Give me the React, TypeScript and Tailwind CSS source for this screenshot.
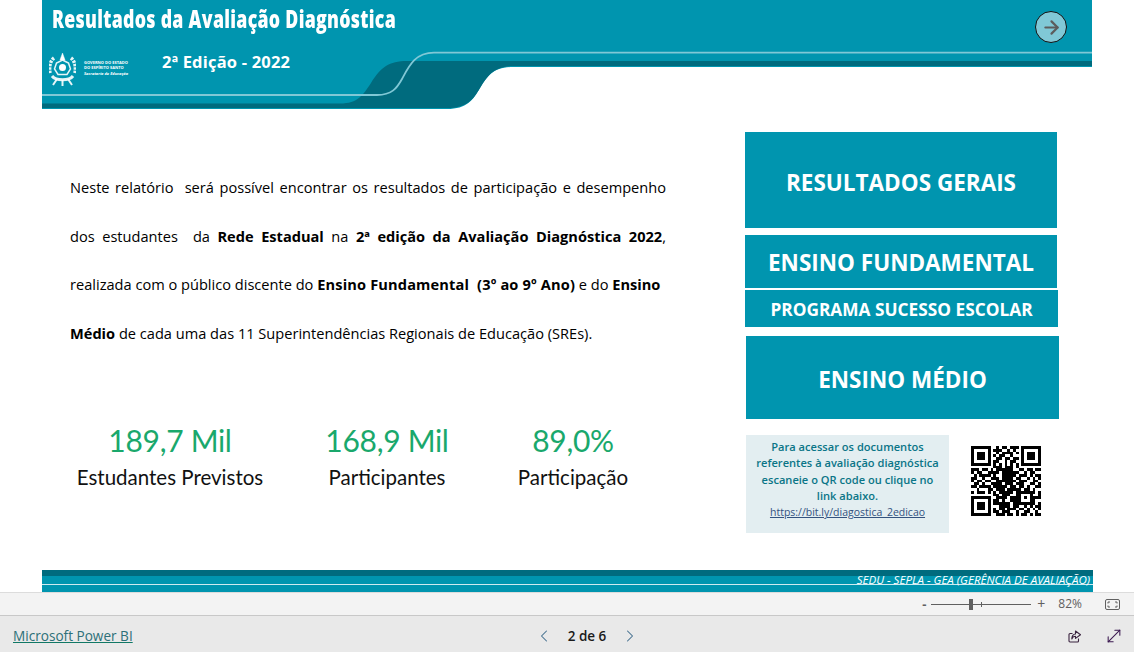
import { ArrowRight, ChevronLeft, ChevronRight, MoveDiagonal } from 'lucide-react'

const QR_ROWS = [
  '1111111001011011101111111',
  '1000001011100101001000001',
  '1011101001011110101011101',
  '1011101010110010001011101',
  '1011101001101101101011101',
  '1000001011001011001000001',
  '1111111010101010101111111',
  '0000000011101110100000000',
  '1110110101111110011011011',
  '1011001111011111100101100',
  '0101111010011111011101011',
  '1100100111011110110010101',
  '1011011001111111011100110',
  '0110100111101110111001101',
  '1101111011111011011010011',
  '0010001101110111110110100',
  '1011101010111110111111101',
  '0000000011011100110001001',
  '1111111001111011110101111',
  '1000001011010011110001100',
  '1011101011111101111111101',
  '1011101000111101100101011',
  '1011101010110111011010101',
  '1000001011011100100110010',
  '1111111001110110101101011',
]

function QrCode() {
  return (
    <svg width="70" height="70" viewBox="0 0 25 25" shapeRendering="crispEdges">
      {QR_ROWS.map((row, y) =>
        row.split('').map((cell, x) =>
          cell === '1' ? <rect key={`${x}-${y}`} x={x} y={y} width="1" height="1" fill="#000" /> : null,
        ),
      )}
    </svg>
  )
}

function Crest() {
  return (
    <svg width="27" height="33" viewBox="0 0 27 33" fill="none" className="shrink-0 blur-[0.4px]">
      <g stroke="#fff" strokeOpacity="0.9">
        <path d="M13.5 0l2.5 7h-5z" fill="#fff" strokeWidth="0.5" />
        <path d="M13.5 7l6 3 2 6-3.5 5.5h-9L5.500 16l2-6z" strokeWidth="1.5" />
        <circle cx="13.500" cy="14.500" r="3.500" fill="#fff" strokeWidth="0" />
        <path d="M5 5C1 8 0 14 1 20M22 5c4 3 5 9 4 15" strokeWidth="3.500" strokeDasharray="2.500 1" />
        <path d="M3 23c4 5 17 5 21 0" strokeWidth="3" />
        <path d="M8 26l-4 6M19 26l4 6M13.500 27v6" strokeWidth="2" />
      </g>
    </svg>
  )
}

function ReportHeader() {
  return (
    <div className="relative ml-[42px] h-[109px] w-[1050px] shrink-0">
      <svg className="absolute inset-0" width="1050" height="109" viewBox="0 0 1050 109" fill="none">
        <path d="M0 0H1050V67H472C452 67 446 75 438 88C431 100 425 109 405 109H0Z" fill="#0095af" />
        <path d="M0 103.5H298C316 103.5 321 95 329 83C339 67 347 61 365 61H1050V66H472C452 66 446 75 438 88C431 100 425 108 405 108H0Z" fill="#006b7e" />
        <path d="M0 95H335C350 95 355 88 360 79C367 66 373 52.7 392 52.7H1050" stroke="#80c8d6" strokeWidth="1.8" />
      </svg>
      <div className="relative flex h-full flex-col">
        <div className="flex items-start justify-between pl-[10px] pr-[25px]">
          <h1 className="mt-[1px] w-[460px] origin-left scale-x-[0.71] whitespace-nowrap font-['Open_Sans',sans-serif] text-[25px] font-extrabold leading-[34px] tracking-[0.4px] text-white">
            Resultados da Avaliação Diagnóstica
          </h1>
          <button className="mt-[11px] flex h-[32px] w-[32px] items-center justify-center rounded-full border border-[#111] bg-[#80c8d6]">
            <ArrowRight size={21} strokeWidth={2.5} className="text-[#5c5c5c]" />
          </button>
        </div>
        <div className="mt-[10px] flex items-center pl-[7px]">
          <Crest />
          <div className="-mt-[3px] ml-[8px] w-[78px] font-['Open_Sans',sans-serif] text-[4px] font-bold leading-[5.5px] text-white">
            <div>GOVERNO DO ESTADO</div>
            <div>DO ESPÍRITO SANTO</div>
            <div className="italic">Secretaria de Educação</div>
          </div>
          <div className="-mt-[14px] font-['Open_Sans',sans-serif] text-[16.500px] font-bold tracking-[0.2px] text-white">
            2ª Edição - 2022
          </div>
        </div>
      </div>
    </div>
  )
}

function Intro() {
  return (
    <div className="font-['Open_Sans',sans-serif] text-[14.600px] leading-[48.500px] text-black">
      <div className="text-justify whitespace-pre-wrap [text-align-last:justify]">
        Neste relatório  será possível encontrar os resultados de participação e desempenho
      </div>
      <div className="text-justify whitespace-pre-wrap [text-align-last:justify]">
        dos estudantes  da <b>Rede Estadual</b> na <b>2ª edição da Avaliação Diagnóstica 2022</b>,
      </div>
      <div className="whitespace-pre">
        realizada com o público discente do <b className="tracking-[0.15px]">Ensino Fundamental  (3º ao 9º Ano)</b> e do <b>Ensino</b>
      </div>
      <div className="whitespace-nowrap">
        <b>Médio</b> de cada uma das 11 Superintendências Regionais de Educação (SREs).
      </div>
    </div>
  )
}

function Kpi({ value, label, className }: { value: string; label: string; className: string }) {
  return (
    <div className={`${className} text-center font-['Lato',sans-serif]`}>
      <div className="-mt-[1px] text-[30px] leading-[42px] tracking-[-0.3px] text-[#1aa86c]">{value}</div>
      <div className="mt-[2px] whitespace-nowrap text-[20.500px] leading-[28px] text-[#111]">{label}</div>
    </div>
  )
}

function BigButton({ children, className }: { children: string; className: string }) {
  return (
    <button className={`${className} flex items-center justify-center bg-[#0095af] font-['Open_Sans',sans-serif] font-bold text-white`}>
      {children}
    </button>
  )
}

function FooterBand() {
  return (
    <div className="ml-[42px] h-[22px] w-[1051px] shrink-0 bg-[#0095af]">
      <div className="h-[6px] bg-[#006b7e]" />
      <div className="flex h-[9px] items-center justify-end border-b border-[#cfeaf0] pr-[3px] font-['Open_Sans',sans-serif] text-[11.550px] italic leading-[14px] text-white">
        SEDU - SEPLA - GEA (GERÊNCIA DE AVALIAÇÃO)
      </div>
    </div>
  )
}

function ZoomBar() {
  return (
    <div className="flex h-[24px] shrink-0 items-center justify-end border-y border-y-[#dcdcdc] border-b-[#c8c8c8] bg-[#f3f3f3] pr-[14px] text-[#606060]">
      <span className="w-[8px] font-['Open_Sans',sans-serif] text-[13px] font-bold leading-none">-</span>
      <div className="relative ml-[1px] h-[1px] w-[100px] bg-[#606060]">
        <div className="absolute -top-[5px] left-[38px] h-[11px] w-[4px] bg-[#606060]" />
        <div className="absolute -top-[2px] left-[50px] h-[5px] w-[1px] bg-[#606060]" />
      </div>
      <span className="ml-[6px] font-['Open_Sans',sans-serif] text-[14px] leading-none">+</span>
      <span className="ml-[13px] font-['Open_Sans',sans-serif] text-[12px]">82%</span>
      <svg width="15" height="11" viewBox="0 0 15 11" fill="none" stroke="currentColor" className="ml-[23px]">
        <rect x="0.500" y="0.500" width="14" height="10" rx="1.500" />
        <path d="M3 4.500V3h2M10 3h2v1.500M12 6.500V8h-2M5 8H3V6.500" />
      </svg>
    </div>
  )
}

function BottomBar() {
  return (
    <div className="grid h-[36px] shrink-0 grid-cols-3 items-center bg-[#e9e9e9] px-[13px] pt-[4px]">
      <a className="font-['Open_Sans',sans-serif] text-[13.600px] text-[#2d7078] underline decoration-[#117865]" href="#">
        Microsoft Power BI
      </a>
      <div className="flex items-center justify-center pl-[40px]">
        <ChevronLeft size={20} strokeWidth={1.25} className="text-[#3f6c8c]" />
        <span className="mx-[14px] font-['Open_Sans',sans-serif] text-[13.500px] font-semibold text-[#1a1a1a]">2 de 6</span>
        <ChevronRight size={20} strokeWidth={1.25} className="text-[#3f6c8c]" />
      </div>
      <div className="-mr-[3px] flex items-center justify-end gap-[23px]">
        <svg width="13" height="13" viewBox="0 0 13 13" fill="none" stroke="#3b2440" strokeWidth="1.100" strokeLinejoin="round">
          <path d="M10.500 8.500v2.500a1 1 0 0 1-1 1H2a1 1 0 0 1-1-1V4.500a1 1 0 0 1 1-1h2.500" />
          <path d="M7.500 1l5 3.700-5 3.700V6.300C5.800 6.300 4.500 7.200 3.800 9c0-3 1.500-5 3.700-5z" />
        </svg>
        <MoveDiagonal size={20} strokeWidth={1.25} className="text-[#3b1850]" />
      </div>
    </div>
  )
}

export default function App() {
  return (
    <div className="flex h-[652px] w-full flex-col overflow-hidden bg-white">
      <div className="flex h-[592px] shrink-0 flex-col">
        <ReportHeader />
        <div className="flex h-[461px] shrink-0">
          <div className="w-[745px] shrink-0 pl-[70px] pr-[79px] pt-[54px]">
            <Intro />
            <div className="mt-[63px] flex">
              <Kpi value="189,7 Mil" label="Estudantes Previstos" className="w-[200px]" />
              <Kpi value="168,9 Mil" label="Participantes" className="w-[234px]" />
              <Kpi value="89,0%" label="Participação" className="w-[138px]" />
            </div>
          </div>
          <div className="w-[314px] shrink-0 pt-[23px]">
            <BigButton className="h-[96px] w-[312px] pt-[5px] text-[22.500px]">RESULTADOS GERAIS</BigButton>
            <BigButton className="mt-[7px] h-[53px] w-[312px] pt-[3px] text-[22.500px]">ENSINO FUNDAMENTAL</BigButton>
            <BigButton className="mt-[2px] h-[37px] w-[313px] pt-[3px] text-[17.300px]">PROGRAMA SUCESSO ESCOLAR</BigButton>
            <BigButton className="ml-[1px] mt-[9px] h-[83px] w-[313px] pt-[5px] text-[22.500px]">ENSINO MÉDIO</BigButton>
            <div className="ml-[1px] mt-[16px] flex items-start">
              <div className="h-[98px] w-[203px] shrink-0 bg-[#e3eef1] pt-[4px] text-center font-['Open_Sans',sans-serif] text-[11.100px] font-semibold leading-[16.300px] text-[#0a7587]">
                <div>Para acessar os documentos</div>
                <div className="whitespace-nowrap">referentes à avaliação diagnóstica</div>
                <div>escaneie o QR code ou clique no</div>
                <div>link abaixo.</div>
                <a href="#" className="text-[10.500px] font-normal text-[#33527f] underline">https://bit.ly/diagostica_2edicao</a>
              </div>
              <div className="ml-[22px] mt-[11px]">
                <QrCode />
              </div>
            </div>
          </div>
        </div>
        <FooterBand />
      </div>
      <ZoomBar />
      <BottomBar />
    </div>
  )
}
